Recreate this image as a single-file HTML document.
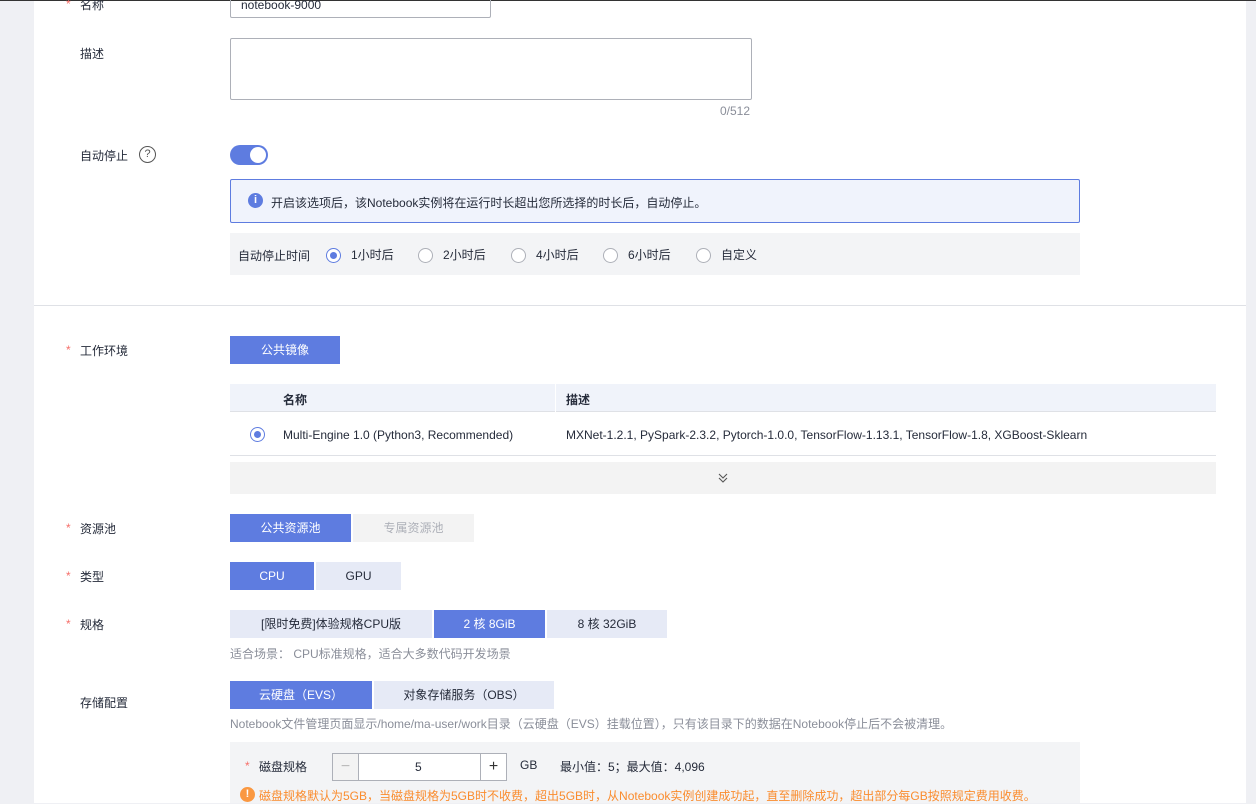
<!DOCTYPE html>
<html><head><meta charset="utf-8"><style>
*{margin:0;padding:0;box-sizing:border-box}
body{width:1256px;height:803px;overflow:hidden;background:#eff0f4;font-family:"Liberation Sans","Noto Sans CJK SC",sans-serif;font-size:12px;color:#252b3a;position:relative}
.main{position:absolute;left:34px;top:0;width:1212px;height:803px;background:#fff}
.a{position:absolute;white-space:nowrap}
.lbl{color:#252b3a}
.star{color:#f66f6a;position:absolute;left:-14px;top:1px}
.btn{position:absolute;height:28px;line-height:28px;text-align:center;background:#e6eaf6;color:#252b3a}
.btn.on{background:#5e7ce0;color:#fff}
.btn.dis{background:#f3f3f3;color:#adb0b8}
.radio{display:inline-block;width:15px;height:15px;border:1px solid #adb0b8;border-radius:50%;vertical-align:middle;position:relative;background:#fff}
.radio.on{border-color:#5e7ce0}
.radio.on:after{content:"";position:absolute;left:3px;top:3px;width:7px;height:7px;border-radius:50%;background:#5e7ce0}
.gray{color:#8a8e99}
</style></head><body>
<div class="main"></div>
<div class="a" style="left:0;top:0;width:1256px;height:1px;background:#333"></div>

<div class="a lbl" style="left:80px;top:-4px"><span class="star">*</span>名称</div>
<div class="a" style="left:230px;top:-6px;width:261px;height:24px;border:1px solid #adb0b8;border-radius:2px;padding:3px 10px">notebook-9000</div>

<div class="a lbl" style="left:80px;top:45px">描述</div>
<div class="a" style="left:230px;top:38px;width:522px;height:62px;border:1px solid #adb0b8;border-radius:2px"></div>
<div class="a gray" style="left:720px;top:104px">0/512</div>

<div class="a lbl" style="left:80px;top:147px">自动停止</div>
<div class="a" style="left:139px;top:146px;width:17px;height:17px;border:1.3px solid #555;border-radius:50%;text-align:center;line-height:14px;font-size:11px;color:#555">?</div>
<div class="a" style="left:230px;top:145px;width:38px;height:20px;border-radius:10px;background:#5e7ce0"><div style="position:absolute;right:2px;top:2px;width:16px;height:16px;border-radius:50%;background:#fff"></div></div>

<div class="a" style="left:230px;top:179px;width:850px;height:44px;border:1px solid #5e7ce0;background:#f0f3fc;border-radius:2px"></div>
<div class="a" style="left:248px;top:193px;width:15px;height:15px;border-radius:50%;background:#5e7ce0;color:#fff;font-weight:bold;text-align:center;line-height:15px;font-size:11px">i</div>
<div class="a" style="left:271px;top:194px">开启该选项后，该Notebook实例将在运行时长超出您所选择的时长后，自动停止。</div>

<div class="a" style="left:230px;top:233px;width:850px;height:42px;background:#f3f4f6"></div>
<div class="a" style="left:238px;top:247px">自动停止时间</div>
<div class="a" style="left:326px;top:246px"><span class="radio on"></span><span style="margin-left:10px">1小时后</span></div>
<div class="a" style="left:418px;top:246px"><span class="radio"></span><span style="margin-left:10px">2小时后</span></div>
<div class="a" style="left:511px;top:246px"><span class="radio"></span><span style="margin-left:10px">4小时后</span></div>
<div class="a" style="left:603px;top:246px"><span class="radio"></span><span style="margin-left:10px">6小时后</span></div>
<div class="a" style="left:696px;top:246px"><span class="radio"></span><span style="margin-left:10px">自定义</span></div>

<div class="a" style="left:34px;top:305px;width:1212px;height:1px;background:#dfe1e6"></div>

<div class="a lbl" style="left:80px;top:342px"><span class="star">*</span>工作环境</div>
<div class="btn on" style="left:230px;top:336px;width:110px">公共镜像</div>

<div class="a" style="left:230px;top:384px;width:986px;height:28px;background:#f0f3fa;border-bottom:1px solid #dfe1e6"></div>
<div class="a" style="left:555px;top:384px;width:1px;height:28px;background:#fff"></div>
<div class="a" style="left:283px;top:391px;font-weight:bold">名称</div>
<div class="a" style="left:566px;top:391px;font-weight:bold">描述</div>
<div class="a" style="left:230px;top:455px;width:986px;height:1px;background:#dfe1e6"></div>
<div class="a" style="left:250px;top:427px"><span class="radio on"></span></div>
<div class="a" style="left:283px;top:428px">Multi-Engine 1.0 (Python3, Recommended)</div>
<div class="a" style="left:566px;top:428px">MXNet-1.2.1, PySpark-2.3.2, Pytorch-1.0.0, TensorFlow-1.13.1, TensorFlow-1.8, XGBoost-Sklearn</div>
<div class="a" style="left:230px;top:462px;width:986px;height:32px;background:#f3f3f3;text-align:center;line-height:32px;color:#555;font-size:11px">
<svg width="10" height="12" viewBox="0 0 10 12" style="vertical-align:middle"><path d="M1 2l4 4 4-4M1 6l4 4 4-4" fill="none" stroke="#555" stroke-width="1.1"/></svg></div>

<div class="a lbl" style="left:80px;top:520px"><span class="star">*</span>资源池</div>
<div class="btn on" style="left:230px;top:514px;width:121px">公共资源池</div>
<div class="btn dis" style="left:353px;top:514px;width:121px">专属资源池</div>

<div class="a lbl" style="left:80px;top:568px"><span class="star">*</span>类型</div>
<div class="btn on" style="left:230px;top:562px;width:84px">CPU</div>
<div class="btn" style="left:316px;top:562px;width:85px">GPU</div>

<div class="a lbl" style="left:80px;top:616px"><span class="star">*</span>规格</div>
<div class="btn" style="left:230px;top:610px;width:202px">[限时免费]体验规格CPU版</div>
<div class="btn on" style="left:434px;top:610px;width:111px">2 核 8GiB</div>
<div class="btn" style="left:547px;top:610px;width:120px">8 核 32GiB</div>
<div class="a gray" style="left:230px;top:645px">适合场景： CPU标准规格，适合大多数代码开发场景</div>

<div class="a lbl" style="left:80px;top:694px">存储配置</div>
<div class="btn on" style="left:230px;top:681px;width:142px">云硬盘（EVS）</div>
<div class="btn" style="left:374px;top:681px;width:180px">对象存储服务（OBS）</div>
<div class="a gray" style="left:230px;top:715px">Notebook文件管理页面显示/home/ma-user/work目录（云硬盘（EVS）挂载位置），只有该目录下的数据在Notebook停止后不会被清理。</div>

<div class="a" style="left:230px;top:742px;width:850px;height:61px;background:#f3f4f6"></div>
<div class="a" style="left:259px;top:758px"><span class="star">*</span>磁盘规格</div>
<div class="a" style="left:332px;top:753px;width:175px;height:28px;border:1px solid #adb0b8;background:#fff"></div>
<div class="a" style="left:332px;top:753px;width:27px;height:28px;background:#f3f3f3;border:1px solid #adb0b8;text-align:center;line-height:26px;color:#bbb;font-size:16px">−</div>
<div class="a" style="left:480px;top:753px;width:27px;height:28px;border:1px solid #adb0b8;text-align:center;line-height:26px;color:#333;font-size:16px">+</div>
<div class="a" style="left:415px;top:760px">5</div>
<div class="a" style="left:520px;top:758px">GB</div>
<div class="a" style="left:560px;top:758px">最小值：5；最大值：4,096</div>
<div class="a" style="left:240px;top:787px;width:15px;height:15px;border-radius:50%;background:#fa9841;color:#fff;font-weight:bold;text-align:center;line-height:15px;font-size:11px">!</div>
<div class="a" style="left:259px;top:787px;color:#fa8c2e">磁盘规格默认为5GB，当磁盘规格为5GB时不收费，超出5GB时，从Notebook实例创建成功起，直至删除成功，超出部分每GB按照规定费用收费。</div>
</body></html>
